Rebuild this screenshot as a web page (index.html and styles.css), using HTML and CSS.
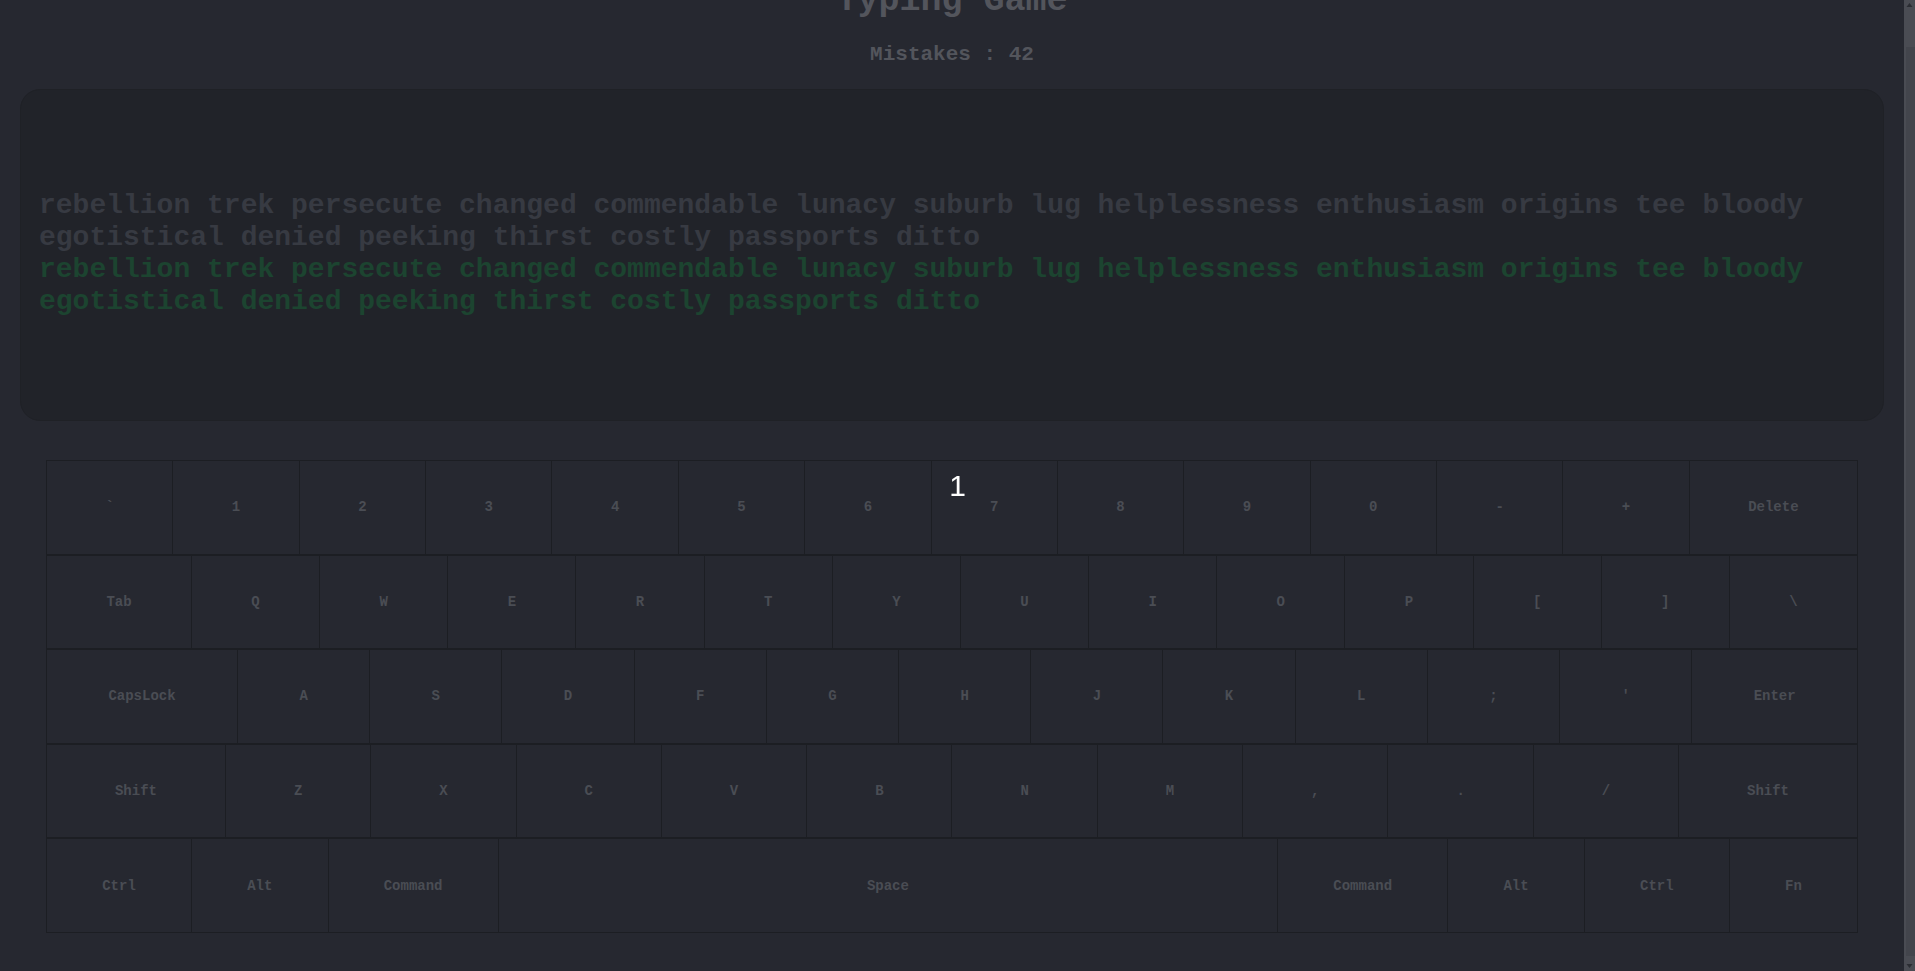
FILE: index.html
```html
<!DOCTYPE html>
<html lang="en">
<head>
<meta charset="utf-8">
<title>Typing Game</title>
<link rel="stylesheet" href="styles.css">
</head>
<body>
<div class="page">
  <h1 class="title">Typing Game</h1>
  <p class="mistakes">Mistakes : 42</p>
  <div class="board">
    <div class="text-wrap">
      <p class="target">rebellion trek persecute changed commendable lunacy suburb lug helplessness enthusiasm origins tee bloody egotistical denied peeking thirst costly passports ditto</p>
      <p class="typed">rebellion trek persecute changed commendable lunacy suburb lug helplessness enthusiasm origins tee bloody egotistical denied peeking thirst costly passports ditto</p>
    </div>
  </div>
  <div class="keyboard">
    <div class="row">
      <div class="key">`</div><div class="key">1</div><div class="key">2</div><div class="key">3</div><div class="key">4</div><div class="key">5</div><div class="key">6</div><div class="key">7</div><div class="key">8</div><div class="key">9</div><div class="key">0</div><div class="key">-</div><div class="key">+</div><div class="key">Delete</div>
    </div>
    <div class="row">
      <div class="key">Tab</div><div class="key">Q</div><div class="key">W</div><div class="key">E</div><div class="key">R</div><div class="key">T</div><div class="key">Y</div><div class="key">U</div><div class="key">I</div><div class="key">O</div><div class="key">P</div><div class="key">[</div><div class="key">]</div><div class="key">\</div>
    </div>
    <div class="row">
      <div class="key">CapsLock</div><div class="key">A</div><div class="key">S</div><div class="key">D</div><div class="key">F</div><div class="key">G</div><div class="key">H</div><div class="key">J</div><div class="key">K</div><div class="key">L</div><div class="key">;</div><div class="key">'</div><div class="key">Enter</div>
    </div>
    <div class="row">
      <div class="key">Shift</div><div class="key">Z</div><div class="key">X</div><div class="key">C</div><div class="key">V</div><div class="key">B</div><div class="key">N</div><div class="key">M</div><div class="key">,</div><div class="key">.</div><div class="key">/</div><div class="key">Shift</div>
    </div>
    <div class="row">
      <div class="key">Ctrl</div><div class="key">Alt</div><div class="key">Command</div><div class="key key-space">Space</div><div class="key">Command</div><div class="key">Alt</div><div class="key">Ctrl</div><div class="key">Fn</div>
    </div>
  </div>
</div>
<div class="countdown"><span class="count">1</span></div>
<div class="scrollbar">
  <svg class="sb-arrow" width="11" height="15" viewBox="0 0 11 15"><path d="M5.5 3 L8.5 7 L2.5 7 Z" fill="#2b2d33"/></svg>
  <div class="sb-track"><div class="sb-thumb"></div></div>
  <svg class="sb-arrow" width="11" height="15" viewBox="0 0 11 15"><path d="M2.5 8 L8.5 8 L5.5 12 Z" fill="#2b2d33"/></svg>
</div>
<script src="script.js"></script>
</body>
</html>
```
FILE: styles.css
```css
html {
  background: #262830;
}
body {
  margin: 0;
  background: #262830;
  font-family: Courier, "Liberation Mono", "Courier New", monospace;
}
.page {
  margin-right: 11px;
  padding: 15px 0 38px;
  display: flex;
  flex-direction: column;
}
.title {
  margin: 0;
  font-size: 35px;
  line-height: 40px;
  font-weight: bold;
  text-align: center;
  color: #53555c;
}
.mistakes {
  margin: 22px 0 0;
  font-size: 21px;
  line-height: 24px;
  font-weight: bold;
  text-align: center;
  color: #53555c;
}
.board {
  box-sizing: border-box;
  margin: 22px 20px 0;
  height: 332px;
  padding: 0 18px 3px;
  display: flex;
  align-items: center;
  background: #212329;
  border: 1px solid #1f2126;
  border-radius: 20px;
}
.text-wrap {
  width: 100%;
}
.target,
.typed {
  margin: 0;
  font-size: 28px;
  font-weight: bold;
  line-height: 32px;
}
.target {
  color: #373a42;
}
.typed {
  color: #1c4430;
}
.keyboard {
  margin: 39px 46px 0;
  display: flex;
  flex-direction: column;
}
.row {
  display: flex;
}
.key {
  box-sizing: border-box;
  flex: 1 1 auto;
  height: 94.6px;
  padding: 0 3px;
  display: flex;
  align-items: center;
  justify-content: center;
  border: 1px solid #1c1e23;
  border-right: none;
  font-size: 14px;
  font-weight: bold;
  color: #4a4d54;
  white-space: nowrap;
}
.key:last-child {
  border-right: 1px solid #1c1e23;
}
.key-space {
  flex-grow: 7;
}
.countdown {
  position: fixed;
  top: 0;
  left: 0;
  width: 100vw;
  height: 100vh;
  display: flex;
  align-items: center;
  justify-content: center;
  pointer-events: none;
}
.count {
  font-family: "Liberation Sans", Arial, sans-serif;
  font-size: 30px;
  color: #ffffff;
}
.scrollbar {
  position: fixed;
  top: 0;
  right: 0;
  width: 11px;
  height: 100vh;
  display: flex;
  flex-direction: column;
  background: #4a4c53;
}
.sb-arrow {
  display: block;
  flex: 0 0 15px;
}
.sb-track {
  flex: 1;
  display: flex;
  flex-direction: column;
  padding: 32px 0 0 2px;
}
.sb-thumb {
  flex: 1;
  background: #43454c;
}
```
FILE: script.js
```js
function toBottom() {
  window.scrollTo(0, document.documentElement.scrollHeight);
}
toBottom();
window.addEventListener('load', toBottom);
```
